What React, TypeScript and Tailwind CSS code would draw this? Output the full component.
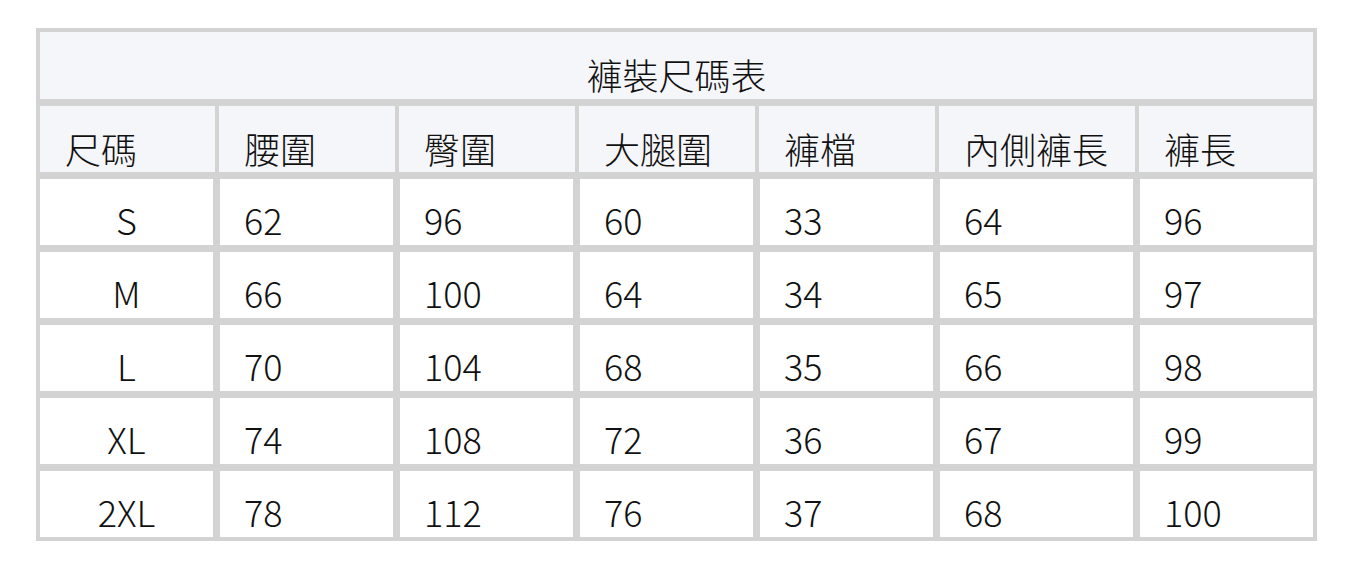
const headers = ["尺碼", "腰圍", "臀圍", "大腿圍", "褲檔", "內側褲長", "褲長"];

const rows = [
  ["S", "62", "96", "60", "33", "64", "96"],
  ["M", "66", "100", "64", "34", "65", "97"],
  ["L", "70", "104", "68", "35", "66", "98"],
  ["XL", "74", "108", "72", "36", "67", "99"],
  ["2XL", "78", "112", "76", "37", "68", "100"],
];

// widths incl. right border; last column has none (the frame draws it)
const bodyW = ["w-[180px]", "w-[180px]", "w-[180px]", "w-[180px]", "w-[180px]", "w-[200px]", "w-[173px]"];
const headW = ["w-[179px]", "w-[180px]", "w-[180px]", "w-[180px]", "w-[180px]", "w-[200px]", "w-[174px]"];

export default function App() {
  return (
    <div
      className="min-h-[569px] bg-white pt-[28px] pl-[36px] text-[36px] font-light text-[#111]"
      style={{ fontFamily: '"Noto Sans CJK TC", "Noto Sans", sans-serif' }}
    >
      <div className="w-[1281px] border-[4px] border-[#d3d3d3]">
        {/* 標題列 */}
        <div className="h-[74px] border-b-[7px] border-[#d3d3d3] bg-[#f5f6fa] pt-[24px] text-center leading-[36px]">
          褲裝尺碼表
        </div>

        {/* 欄位名稱 */}
        <div className="flex h-[73px] border-b-[7px] border-[#d3d3d3] bg-[#f5f6fa]">
          {headers.map((h, i) => (
            <div
              key={h}
              className={`${headW[i]} shrink-0 pt-[24px] pl-[25px] leading-[36px] border-[#d3d3d3] ${i < 6 ? "border-r-[4px]" : ""}`}
            >
              {h}
            </div>
          ))}
        </div>

        {/* 尺寸資料 */}
        {rows.map((r, ri) => (
          <div
            key={r[0]}
            className={`flex border-[#d3d3d3] ${ri < rows.length - 1 ? "h-[73px] border-b-[7px]" : "h-[66px]"}`}
          >
            {r.map((v, i) => (
              <div
                key={i}
                className={`${bodyW[i]} shrink-0 pt-[22px] leading-[36px] border-[#d3d3d3] ${i < 6 ? "border-r-[7px]" : ""} ${i === 0 ? "text-center" : "pl-[24px]"}`}
              >
                {v}
              </div>
            ))}
          </div>
        ))}
      </div>
    </div>
  );
}
